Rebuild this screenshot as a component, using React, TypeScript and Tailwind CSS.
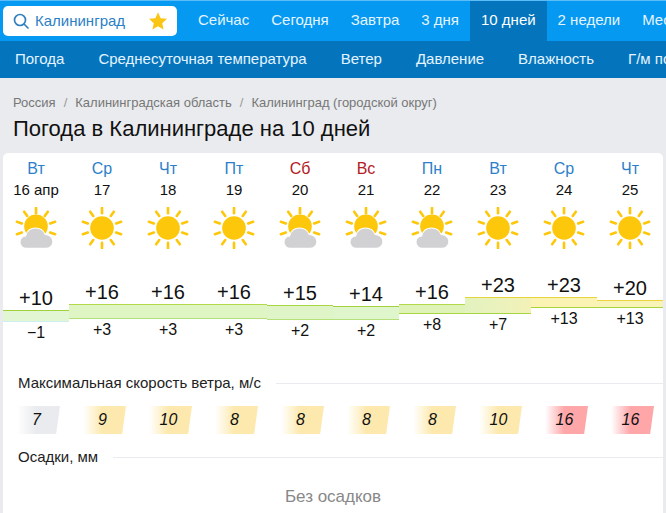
const topTabs = [
  { name: "Сейчас" },
  { name: "Сегодня" },
  { name: "Завтра" },
  { name: "3 дня" },
  { name: "10 дней", active: true },
  { name: "2 недели" },
  { name: "Месяц" },
];

const subTabs = ["Погода", "Среднесуточная температура", "Ветер", "Давление", "Влажность", "Г/м поле"];

const days = [
  { name: "Вт", date: "16 апр", cloud: true, max: "+10", min: "−1", top: 310, bottom: 321, band: "border-t-[#9ed13c] border-b-[#cdeef0] bg-[#e3f6d3]" },
  { name: "Ср", date: "17", max: "+16", min: "+3", top: 304, bottom: 318, band: "border-t-[#b2d94a] border-b-[#b5e07a] bg-[#dff5c3]" },
  { name: "Чт", date: "18", max: "+16", min: "+3", top: 304, bottom: 318, band: "border-t-[#b2d94a] border-b-[#b5e07a] bg-[#dff5c3]" },
  { name: "Пт", date: "19", max: "+16", min: "+3", top: 304, bottom: 318, band: "border-t-[#b2d94a] border-b-[#b5e07a] bg-[#dff5c3]" },
  { name: "Сб", date: "20", red: true, cloud: true, max: "+15", min: "+2", top: 305, bottom: 319, band: "border-t-[#a9d644] border-b-[#b5e07a] bg-[#dff5c8]" },
  { name: "Вс", date: "21", red: true, cloud: true, max: "+14", min: "+2", top: 306, bottom: 319, band: "border-t-[#a2d33f] border-b-[#b5e07a] bg-[#dff5cc]" },
  { name: "Пн", date: "22", cloud: true, max: "+16", min: "+8", top: 304, bottom: 313, band: "border-t-[#b2d94a] border-b-[#a5d63f] bg-[#dff3b8]" },
  { name: "Вт", date: "23", max: "+23", min: "+7", top: 297, bottom: 313, band: "border-t-[#e6d43f] border-b-[#a5d63f] bg-[linear-gradient(to_right,#e2f2c0,#f3f1b8)]" },
  { name: "Ср", date: "24", max: "+23", min: "+13", top: 297, bottom: 307, band: "border-t-[#e6d43f] border-b-[#a9d43c] bg-[#faf3b4]" },
  { name: "Чт", date: "25", max: "+20", min: "+13", top: 300, bottom: 307, band: "border-t-[#f0d23c] border-b-[#a9d43c] bg-[#f8f4b8]" },
];

const gray = "bg-[linear-gradient(to_right,#ffffff00,#e9ebee_45%)]";
const yellow = "bg-[linear-gradient(to_right,#ffffff00,#fde9ae_45%)]";
const red = "bg-[linear-gradient(to_right,#ffffff00,#ffa6a9_45%)]";

const winds = [
  { v: 7, chip: gray },
  { v: 9, chip: yellow },
  { v: 10, chip: yellow },
  { v: 8, chip: yellow },
  { v: 8, chip: yellow },
  { v: 8, chip: yellow },
  { v: 8, chip: yellow },
  { v: 10, chip: yellow },
  { v: 16, chip: red },
  { v: 16, chip: red },
];

const rays = [0, 36, 72, 108, 144, 180, 216, 252, 288, 324];

function SunIcon({ cloud }: { cloud?: boolean }) {
  return (
    <svg width="42" height="42" viewBox="0 0 48 48" className="block">
      <g stroke="#fdc70c" strokeWidth="3" strokeLinecap="round">
        {rays
          .filter((r) => !cloud || (r !== 144 && r !== 180 && r !== 216))
          .map((r) => (
            <line key={r} x1="24" y1="7" x2="24" y2="1" transform={`rotate(${r} 24 24)`} />
          ))}
      </g>
      <circle cx="24" cy={cloud ? 22 : 24} r="13.500" fill="#fdc70c" />
      {cloud && (
        <path
          d="M13 47.300c-4 0-7.300-3-7.300-7 0-3.800 2.800-6.800 6.500-7.200C13.500 27.500 18 24 23.500 24c5 0 9.300 3 11 7.500 4.800 0 8.800 3.500 8.800 8 0 4.300-3.500 7.800-8 7.800z"
          fill="#d1d1d3"
          stroke="#ffffff"
          strokeWidth="1.200"
        />
      )}
    </svg>
  );
}

function SectionTitle({ text }: { text: string }) {
  return (
    <div className="flex items-center gap-[15px] pl-[15px] text-[15px] leading-[20px] text-[#222]">
      <span className="whitespace-nowrap">{text}</span>
      <div className="h-px flex-1 bg-[#e9ebee]" />
    </div>
  );
}

export default function App() {
  return (
    <div className="h-[513px] w-[666px] overflow-hidden bg-[#e9ebee] font-['Liberation_Sans',Arial,sans-serif]">
      {/* Top navigation */}
      <div className="flex h-[41px] items-stretch border-t border-t-[#5cbcf5] bg-[#0599f2]">
        <div className="ml-[3px] mt-[5px] flex h-[30px] w-[174px] items-center rounded-[5px] bg-white pl-[9px] pr-[9px]">
          <svg width="18" height="18" viewBox="0 0 18 18" fill="none" stroke="#2f7fbf" strokeWidth="1.700" strokeLinecap="round">
            <circle cx="8" cy="8" r="5.500" />
            <line x1="12" y1="12" x2="16" y2="16" />
          </svg>
          <span className="ml-[5px] text-[15px] text-[#2b80c5]">Калининград</span>
          <svg width="20" height="20" viewBox="0 0 24 24" className="ml-auto" fill="#fbc513">
            <path d="M12 1.500l3.200 7.100 7.600.8-5.700 5.200 1.600 7.600L12 18.300l-6.700 3.900 1.600-7.600L1.200 9.400l7.600-.8z" />
          </svg>
        </div>
        <div className="ml-[10px] flex flex-1 overflow-hidden">
          {topTabs.map((t) => (
            <div
              key={t.name}
              className={
                t.active
                  ? "flex items-center whitespace-nowrap bg-[#0475bd] px-[11px] pb-px text-[15px] text-white"
                  : "flex items-center whitespace-nowrap px-[11px] pb-px text-[15px] text-[#e4f4ff]"
              }
            >
              {t.name}
            </div>
          ))}
        </div>
      </div>

      {/* Second navigation */}
      <div className="flex h-[37px] items-center overflow-hidden bg-[#0475bd]">
        {subTabs.map((t) => (
          <span key={t} className="whitespace-nowrap px-[17px] text-[15px] text-[#e4f4ff] first:pl-[15px]">
            {t}
          </span>
        ))}
      </div>

      {/* Heading */}
      <div className="px-[13px] pt-[17px]">
        <div className="flex items-center text-[13px] leading-[16px] text-[#777]">
          <span>Россия</span>
          <span className="mx-[8px] text-[#999]">/</span>
          <span>Калининградская область</span>
          <span className="mx-[8px] text-[#999]">/</span>
          <span>Калининград (городской округ)</span>
        </div>
        <h1 className="mt-[4px] text-[22px] font-normal leading-[28px] text-[#111]">Погода в Калининграде на 10 дней</h1>
      </div>

      {/* Forecast card */}
      <div className="ml-[3px] mt-[10px] h-[360px] w-[660px] rounded-t-[5px] bg-white">
        <div className="grid grid-cols-10 pt-[6px]">
          {days.map((d, i) => (
            <div key={i} className="flex flex-col items-center">
              <div className={d.red ? "text-[16px] leading-[20px] text-[#b3201f]" : "text-[16px] leading-[20px] text-[#2d7fc9]"}>{d.name}</div>
              <div className="mt-px whitespace-nowrap text-[15px] leading-[20px] text-[#111]">{d.date}</div>
              <div className="mt-[7px]">
                <SunIcon cloud={d.cloud} />
              </div>
            </div>
          ))}
        </div>

        {/* Temperature chart */}
        <div className="grid h-[116px] grid-cols-10">
          {days.map((d, i) => (
            <div key={i} className="flex flex-col" style={{ paddingTop: d.top - 273 }}>
              <div className="text-center text-[20px] leading-[24px] text-[#111]">{d.max}</div>
              <div className={`border-y ${d.band}`} style={{ height: d.bottom - d.top + 1 }} />
              <div className="text-center text-[16px] leading-[22px] text-[#111]">{d.min}</div>
            </div>
          ))}
        </div>

        {/* Wind */}
        <div className="mt-[8px]">
          <SectionTitle text="Максимальная скорость ветра, м/с" />
        </div>
        <div className="mt-[13px] grid grid-cols-10">
          {winds.map((w, i) => (
            <div key={i} className="pl-[14px]">
              <div className={`flex h-[28px] w-[43px] items-center justify-center pr-[4px] text-[16px] italic text-[#111] [clip-path:polygon(0_0,100%_0,91%_100%,0_100%)] ${w.chip}`}>
                {w.v}
              </div>
            </div>
          ))}
        </div>

        {/* Precipitation */}
        <div className="mt-[13px]">
          <SectionTitle text="Осадки, мм" />
        </div>
        <div className="mt-[20px] text-center text-[17px] leading-[20px] text-[#888]">Без осадков</div>
      </div>
    </div>
  );
}
